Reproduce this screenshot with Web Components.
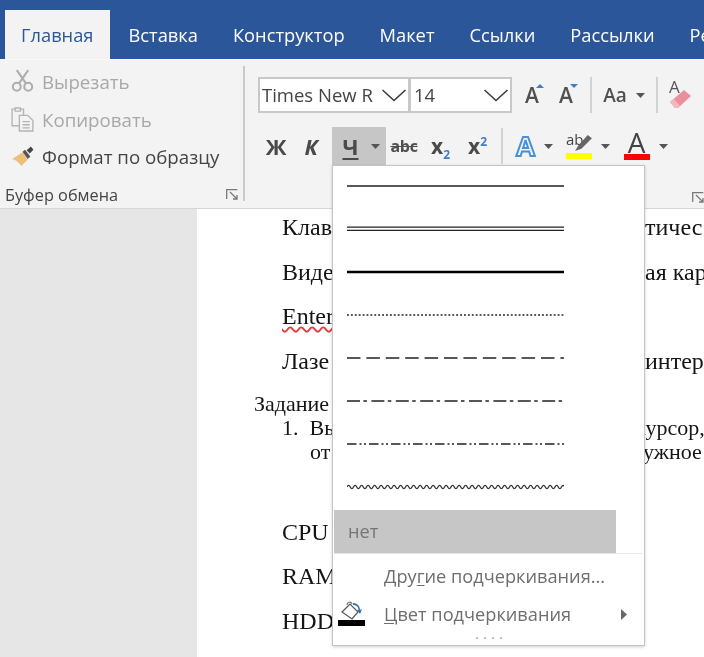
<!DOCTYPE html>
<html lang="ru">
<head>
<meta charset="utf-8">
<title>Word</title>
<style>
  html, body { margin: 0; padding: 0; background: #fff; }
  body { font-family: "Open Sans", "Noto Sans", sans-serif; }
</style>
</head>
<body>
<word-window>
  <tab-strip>
    <tab-item active>Главная</tab-item>
    <tab-item>Вставка</tab-item>
    <tab-item>Конструктор</tab-item>
    <tab-item>Макет</tab-item>
    <tab-item>Ссылки</tab-item>
    <tab-item>Рассылки</tab-item>
    <tab-item>Ре</tab-item>
  </tab-strip>
  <ribbon-bar>
    <clipboard-group></clipboard-group>
    <font-group></font-group>
  </ribbon-bar>
  <doc-area>
    <doc-line><span slot="start">Клав</span><span slot="end">тичес</span></doc-line>
    <doc-line><span slot="start">Виде</span><span slot="end">ая кар</span></doc-line>
    <doc-line spell><span slot="start">Enter</span></doc-line>
    <doc-line><span slot="start">Лазе</span><span slot="end">интер</span></doc-line>
    <doc-line small outdent><span slot="start">Задание</span></doc-line>
    <doc-line small style="--end: 353px"><span slot="start">1.&nbsp;&nbsp;Вы</span><span slot="end">курсор,</span></doc-line>
    <doc-line small indent style="--end: 361px"><span slot="start">от</span><span slot="end">ужное</span></doc-line>
    <doc-line after-gap><span slot="start">CPU</span></doc-line>
    <doc-line><span slot="start">RAM</span></doc-line>
    <doc-line><span slot="start">HDD</span></doc-line>
  </doc-area>
  <underline-menu></underline-menu>
</word-window>

<script>
const CARET = '<svg width="9" height="5" viewBox="0 0 9 5"><path d="M0 0h9L4.5 5z" fill="#555"/></svg>';
const CHEVRON = '<svg width="26" height="14" viewBox="0 0 26 14"><path d="M1.5 2 13 12.5 24.5 2" fill="none" stroke="#3c3c3c" stroke-width="1.6"/></svg>';
const LAUNCHER = '<svg width="12" height="11" viewBox="0 0 12 11"><path d="M.7 10V.7h10.600M4 3l7 7M11 6v4H7" fill="none" stroke="#7a7a7a" stroke-width="1.3"/></svg>';

class WordWindow extends HTMLElement {
  constructor() {
    super();
    this.attachShadow({ mode: 'open' }).innerHTML = `
      <style>
        :host {
          display: flex;
          flex-direction: column;
          position: relative;
          width: 704px;
          height: 657px;
          overflow: hidden;
          filter: blur(0.4px);
        }
      </style>
      <slot></slot>
    `;
  }
}

class TabStrip extends HTMLElement {
  constructor() {
    super();
    this.attachShadow({ mode: 'open' }).innerHTML = `
      <style>
        :host {
          display: flex;
          flex: none;
          height: 50px;
          padding: 10px 0 0 5px;
          background: #2b579a;
          overflow: hidden;
          white-space: nowrap;
        }
      </style>
      <slot></slot>
    `;
  }
}

class TabItem extends HTMLElement {
  constructor() {
    super();
    this.attachShadow({ mode: 'open' }).innerHTML = `
      <style>
        :host {
          display: block;
          flex: none;
          height: 50px;
          padding: 0 17.5px;
          font: 400 18.3px/50px "Open Sans", sans-serif;
          color: #fff;
        }
        :host([active]) {
          background: #f3f3f3;
          color: #2b579a;
          padding: 0 16.5px 0 16px;
          margin-right: 1px;
        }
      </style>
      <slot></slot>
    `;
  }
}

class RibbonBar extends HTMLElement {
  constructor() {
    super();
    this.attachShadow({ mode: 'open' }).innerHTML = `
      <style>
        :host {
          display: flex;
          flex: none;
          height: 148px;
          background: #f3f3f3;
          border-bottom: 1px solid #d6d6d6;
          border-top: 1px solid #f8f8f8;
          margin-top: -1px;
        }
      </style>
      <slot></slot>
    `;
  }
}

class ClipboardGroup extends HTMLElement {
  constructor() {
    super();
    this.attachShadow({ mode: 'open' }).innerHTML = `
      <style>
        :host {
          display: flex;
          flex: none;
          width: 245px;
          font: 400 18.7px "Open Sans", sans-serif;
          color: #a8a8a8;
        }
        .col { flex: 1; display: flex; flex-direction: column; padding-top: 3px; }
        .row { display: flex; align-items: center; height: 37.5px; padding-left: 11px; gap: 8px; }
        .row svg { flex: none; width: 23px; }
        .row.on { color: #444; }
        .foot {
          display: flex;
          justify-content: space-between;
          align-items: center;
          margin-top: 9px;
          padding: 0 5px 0 5px;
          font-size: 16.3px;
          color: #444;
          height: 20px;
        }
        .sep { width: 2px; margin: 6px 0 7px; background: #c9c9c9; flex: none; }
      </style>
      <div class="col">
        <div class="row">
          <svg height="25" viewBox="0 0 22 24" fill="none" stroke="#aeaeae" stroke-width="2" style="margin-top:-2px">
            <circle cx="5.5" cy="18" r="3.8"/><circle cx="16.5" cy="18" r="3.8"/>
            <path d="M7.5 15 16.5 2M14.5 15 5.5 2"/>
          </svg>
          <span>Вырезать</span>
        </div>
        <div class="row">
          <svg height="25" viewBox="0 0 22 24" fill="#f3f3f3" stroke="#b4b4b4" stroke-width="1.3">
            <path d="M1 2h11v16H1z"/><path d="M4 1h5v3H4z"/>
            <path d="M8 8h8l5 5v10H8z"/><path d="M11 14h7M11 17h7M11 20h7" fill="none"/>
          </svg>
          <span>Копировать</span>
        </div>
        <div class="row on">
          <svg height="25" viewBox="0 0 22 24">
            <path d="M1 14.5 11 8l5 7-6 6c-3-3-5-5.500-9-6.500z" fill="#edc07a"/>
            <path d="m11 7.500 5 7 2.500-2.500-5-6.500z" fill="#555"/>
            <path d="m15 6 4-3.500 2.500 3L18 9z" fill="#444"/>
          </svg>
          <span>Формат по образцу</span>
        </div>
        <div class="foot"><span>Буфер обмена</span>${LAUNCHER}</div>
      </div>
      <div class="sep"></div>
    `;
  }
}

class FontGroup extends HTMLElement {
  constructor() {
    super();
    this.attachShadow({ mode: 'open' }).innerHTML = `
      <style>
        :host {
          display: block;
          flex: 1;
          min-width: 0;
          position: relative;
          padding: 17px 0 0 13px;
          font-family: "Open Sans", sans-serif;
          color: #505050;
        }
        .row { display: flex; align-items: center; white-space: nowrap; }
        .r1 { height: 36px; }
        .r2 { height: 38px; margin-top: 14px; }
        .box {
          box-sizing: border-box;
          height: 36px;
          background: #fff;
          border: 2px solid #c8c8c8;
          display: flex;
          align-items: center;
          justify-content: space-between;
          padding: 0 1px 0 2px;
          font-size: 18.5px;
          color: #444;
        }
        .box span { position: relative; top: -1px; }
        .box.font { width: 151px; border-right-width: 1px; }
        .box.size { width: 103px; padding-left: 3px; }
        .cell { display: flex; align-items: center; justify-content: center; flex: none; height: 38px; gap: 9px; position: relative; }
        .grow { position: relative; font-size: 21px; font-weight: 600; line-height: 1; }
        .tri { position: absolute; top: -1px; right: -5px; }
        .sep { width: 2px; height: 36px; background: #d2d2d2; flex: none; }
        .b { font-weight: 700; font-size: 22px; color: #4a4a4a; }
        .u-box { width: 54px; background: #c6c6c6; margin-left: 4px; box-sizing: border-box; gap: 12px; padding-left: 4px; }
        .u-box .b { text-decoration: underline; text-underline-offset: 3px; text-decoration-thickness: 2px; }
        .strike { font-size: 16px; font-weight: 700; text-decoration: line-through; letter-spacing: -0.3px; }
        sub, sup { font-size: 12px; color: #3f7fbf; line-height: 0; font-weight: 700; }
        .outline { font-size: 27px; font-weight: 700; color: #eef5fc; -webkit-text-stroke: 2px #4a90d4; line-height: 1; position: relative; top: -1px; }
        .stack { display: flex; flex-direction: column; align-items: center; width: 26px; position: relative; }
        .ab { font-size: 15px; line-height: 14px; height: 19px; align-self: flex-start; color: #444; position: relative; top: -2px; }
        .pen { position: absolute; top: -1px; right: -1px; }
        .bar { width: 26px; height: 6px; display: block; }
        .fa { font-size: 28px; line-height: 21px; height: 22px; font-weight: 400; color: #444; }
        .launcher { position: absolute; left: 447px; top: 126px; }
      </style>
      <div class="row r1">
        <div class="box font"><span>Times New R</span>${CHEVRON}</div>
        <div class="box size"><span>14</span>${CHEVRON}</div>
        <div class="cell" style="width:40px"><span class="grow">A<svg class="tri" width="8" height="4"><path d="M0 4 4 0 8 4z" fill="#3f7fbf"/></svg></span></div>
        <div class="cell" style="width:28px"><span class="grow">A<svg class="tri" width="8" height="4"><path d="M0 0h8L4 4z" fill="#3f7fbf"/></svg></span></div>
        <div class="sep" style="margin-left:10px"></div>
        <div class="cell" style="width:64px"><span style="font-size:19px;font-weight:600">Aa</span>${CARET}</div>
        <div class="sep"></div>
        <div class="cell" style="width:46px">
          <span style="position:relative;width:26px;height:28px;display:block">
            <span style="position:absolute;left:1px;top:-4px;font-size:17px;line-height:20px;color:#555">A</span>
            <svg style="position:absolute;left:1px;top:6px" width="24" height="22" viewBox="0 0 24 22">
              <path d="M1 15 15 3l7 6L9 21H6z" fill="#ea8f9c"/><path d="m1 15 5 6h3l2-2-6-7z" fill="#f3b7bf"/>
            </svg>
          </span>
        </div>
      </div>
      <div class="row r2">
        <div class="cell" style="width:36px"><span class="b">Ж</span></div>
        <div class="cell" style="width:34px"><span class="b" style="font-style:italic">К</span></div>
        <div class="cell u-box"><span class="b">Ч</span>${CARET}</div>
        <div class="cell" style="width:36px"><span class="strike">abc</span></div>
        <div class="cell" style="width:37px"><span class="b" style="font-size:21px">x<sub>2</sub></span></div>
        <div class="cell" style="width:37px"><span class="b" style="font-size:21px">x<sup>2</sup></span></div>
        <div class="sep" style="margin-left:5px"></div>
        <div class="cell" style="width:57px;padding-left:6px;box-sizing:border-box"><span class="outline">A</span>${CARET}</div>
        <div class="cell" style="width:56px">
          <span class="stack">
            <span class="ab">ab</span>
            <svg class="pen" width="18" height="19" viewBox="0 0 17 18"><path d="M0 17 3 12 12 2l4 3L6 15z" fill="#666"/></svg>
            <span class="bar" style="background:#ffff00"></span>
          </span>${CARET}
        </div>
        <div class="cell" style="width:59px">
          <span class="stack"><span class="fa">A</span><span class="bar" style="background:#ff0000"></span></span>${CARET}
        </div>
      </div>
      <div class="launcher">${LAUNCHER}</div>
    `;
  }
}

class DocArea extends HTMLElement {
  constructor() {
    super();
    this.attachShadow({ mode: 'open' }).innerHTML = `
      <style>
        :host {
          display: flex;
          flex: 1;
          min-height: 0;
          background: #e6e6e6;
          padding-left: 197px;
        }
        .page {
          flex: 1;
          min-width: 0;
          background: #fff;
          padding: 6px 0 0 85px;
          overflow: hidden;
        }
      </style>
      <div class="page"><slot></slot></div>
    `;
  }
}

class DocLine extends HTMLElement {
  constructor() {
    super();
    this.attachShadow({ mode: 'open' }).innerHTML = `
      <style>
        :host {
          display: grid;
          grid-template-columns: var(--end, 363px) 1fr;
          height: 24px;
          margin-bottom: 20.7px;
          font: 400 24px/24px "Liberation Serif", "Times New Roman", serif;
          color: #151515;
          white-space: nowrap;
        }
        :host([small]) { font-size: 22px; margin-bottom: 0; }
        :host([outdent]) { margin-left: -28px; margin-top: -2px; }
        :host([indent]) .start { padding-left: 28px; }
        :host([after-gap]) { margin-top: 56px; }
        :host([spell]) .start { text-decoration: underline wavy #e23c3c 1.5px; text-underline-offset: 2px; }
      </style>
      <div class="start"><slot name="start"></slot></div>
      <div class="end"><slot name="end"></slot></div>
    `;
  }
}

class LineSample extends HTMLElement {
  connectedCallback() {
    const kind = this.getAttribute('kind');
    const dash = {
      dotted: '1.9 2',
      dashed: '13.5 5.9',
      dashdot: '13 3.4 3.5 4.5',
      dashdotdot: '9.5 3 2 2.5 2 3',
    }[kind];
    let shape = '';
    if (kind === 'double') {
      shape = '<path d="M0 1.2H217M0 4.3H217" stroke="#222" stroke-width="1.2"/>';
    } else if (kind === 'thick') {
      shape = '<path d="M0 3H217" stroke="#000" stroke-width="2.5"/>';
    } else if (kind === 'wave') {
      let d = 'M0 3';
      for (let x = 0; x < 215; x += 6.5) {
        d += ' q1.625 -3.4 3.25 0 t3.25 0';
      }
      shape = `<path d="${d}" fill="none" stroke="#333" stroke-width="1.3"/>`;
    } else if (dash) {
      shape = `<path d="M0 3H217" stroke="#222" stroke-width="1.5" stroke-dasharray="${dash}"/>`;
    } else {
      shape = '<path d="M0 3H217" stroke="#222" stroke-width="1.5"/>';
    }
    this.attachShadow({ mode: 'open' }).innerHTML = `
      <style>
        :host { display: block; box-sizing: border-box; height: 43px; padding: 16.5px 0 0 14px; }
        svg { display: block; overflow: hidden; }
      </style>
      <svg width="217" height="6" viewBox="0 0 217 6">${shape}</svg>
    `;
  }
}

class UnderlineMenu extends HTMLElement {
  constructor() {
    super();
    const kinds = ['solid', 'double', 'thick', 'dotted', 'dashed', 'dashdot', 'dashdotdot', 'wave'];
    this.attachShadow({ mode: 'open' }).innerHTML = `
      <style>
        :host {
          position: absolute;
          left: 332px;
          top: 165px;
          width: 311px;
          height: 479px;
          background: #fff;
          border: 1.5px solid #c4c4c4;
          box-shadow: 0 1px 3px rgba(0,0,0,.18);
          font: 400 18.2px "Open Sans", sans-serif;
          color: #6e6e6e;
        }
        .none {
          box-sizing: border-box;
          width: 282px;
          height: 43px;
          margin-left: 1px;
          padding-left: 14px;
          line-height: 43px;
          background: #c6c6c6;
          color: #757575;
        }
        .rule { height: 1px; margin: 0 2px 0 1px; background: #e6e6e6; }
        .item { display: flex; align-items: center; height: 38px; position: relative; }
        .item .ic { width: 51px; flex: none; display: flex; justify-content: flex-start; padding-left: 5px; box-sizing: border-box; }
        .item .txt { flex: 1; }
        .item .arrow { margin-right: 17px; }
        u { text-underline-offset: 2px; }
        .first { margin-top: 3px; }
        .dots { height: 5px; display: flex; justify-content: center; align-items: center; gap: 6px; margin-top: 2px; }
        .dots i { width: 2px; height: 2px; background: #c2c2c2; display: block; }
      </style>
      ${kinds.map((k) => `<line-sample kind="${k}"></line-sample>`).join('')}
      <div class="none">нет</div>
      <div class="rule"></div>
      <div class="item first"><span class="ic"></span><span class="txt">Дру<u>г</u>ие подчеркивания...</span></div>
      <div class="item">
        <span class="ic">
          <svg width="28" height="28" viewBox="0 0 28 28" style="margin-top:-3px">
            <path d="M4 13 12 5l8 8-6 7z" fill="#fff" stroke="#555" stroke-width="1.2"/>
            <path d="M9 6c0-3 4-4 5-1" fill="none" stroke="#777" stroke-width="1.2"/>
            <path d="M15 4c4 0 7 3 7 7l2-1-2 5-3-4h1.5c0-3-2-5-5.5-5z" fill="#2f6eb5"/>
            <rect x="0" y="21" width="27" height="6" fill="#000"/>
          </svg>
        </span>
        <span class="txt"><u>Ц</u>вет подчеркивания</span>
        <svg class="arrow" width="6" height="11" viewBox="0 0 6 11"><path d="M0 0l6 5.5L0 11z" fill="#666"/></svg>
      </div>
      <div class="dots"><i></i><i></i><i></i><i></i></div>
    `;
  }
}

customElements.define('word-window', WordWindow);
customElements.define('tab-strip', TabStrip);
customElements.define('tab-item', TabItem);
customElements.define('ribbon-bar', RibbonBar);
customElements.define('clipboard-group', ClipboardGroup);
customElements.define('font-group', FontGroup);
customElements.define('doc-area', DocArea);
customElements.define('doc-line', DocLine);
customElements.define('line-sample', LineSample);
customElements.define('underline-menu', UnderlineMenu);
</script>
</body>
</html>
